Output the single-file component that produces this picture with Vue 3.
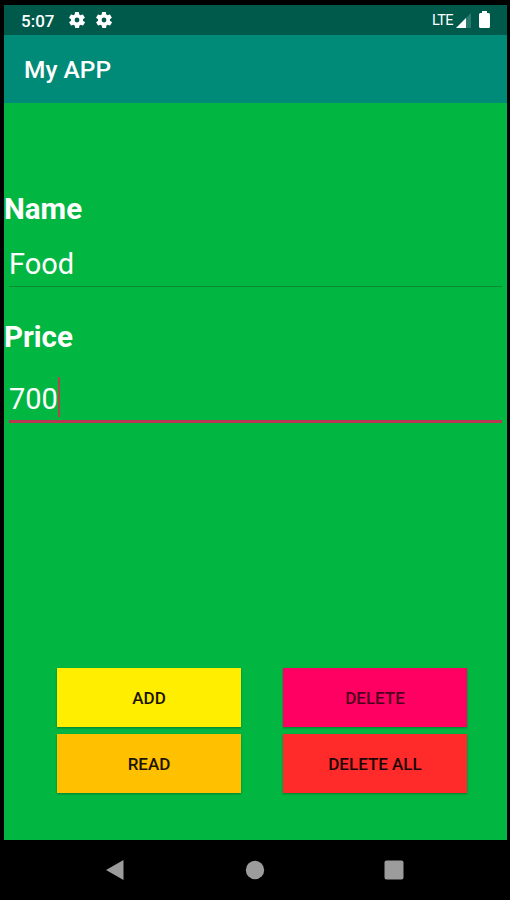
<script setup>
import { ref } from 'vue'

const fields = ref([
  { label: 'Name', value: 'Food', focused: false },
  { label: 'Price', value: '700', focused: true },
])

const buttons = [
  { text: 'ADD', type: 'add' },
  { text: 'DELETE', type: 'delete' },
  { text: 'READ', type: 'read' },
  { text: 'DELETE ALL', type: 'delete-all' },
]
</script>

<template>
  <div class="phone">
    <div class="screen">
      <div class="status-bar">
        <span class="time">5:07</span>
        <svg v-for="n in 2" :key="n" class="gear" viewBox="2 2 20 20">
          <path
            fill-rule="evenodd"
            d="M19.4 13c.1-.3.1-.7.1-1s0-.7-.1-1l2.1-1.6c.2-.2.3-.4.1-.7l-2-3.4c-.1-.2-.4-.3-.6-.2l-2.5 1c-.5-.4-1.1-.7-1.7-1l-.4-2.6c0-.3-.2-.5-.4-.5h-4c-.3 0-.5.2-.5.4l-.4 2.7c-.6.2-1.1.6-1.7 1l-2.5-1c-.2-.1-.5 0-.6.2l-2 3.4c-.1.2-.1.5.1.7L4.6 11c-.1.3-.1.7-.1 1s0 .7.1 1l-2.1 1.6c-.2.2-.3.4-.1.7l2 3.4c.1.2.4.3.6.2l2.5-1c.5.4 1.1.7 1.7 1l.4 2.6c0 .3.2.5.5.5h4c.2 0 .5-.2.5-.4l.4-2.7c.6-.2 1.1-.6 1.7-1l2.5 1c.2.1.5 0 .6-.2l2-3.4c.1-.2.1-.5-.1-.7zM12 15a3 3 0 1 1 0-6 3 3 0 0 1 0 6z"
          />
        </svg>
        <span class="network">LTE</span>
        <svg class="signal" viewBox="0 0 15 15">
          <path class="faint" d="M15 0v15H0z" />
          <path d="M10 5v10H0z" />
        </svg>
        <svg class="battery" viewBox="0 0 11 17">
          <path d="M3 0h5v2h1.5Q11 2 11 3.5v12Q11 17 9.5 17h-8Q0 17 0 15.5v-12Q0 2 1.5 2H3z" />
        </svg>
      </div>

      <header class="toolbar">My APP</header>

      <main class="content">
        <div v-for="field in fields" :key="field.label" class="field" :class="{ focused: field.focused }">
          <div class="label">{{ field.label }}</div>
          <div class="input">
            <span>{{ field.value }}</span>
            <span v-if="field.focused" class="caret"></span>
          </div>
        </div>

        <div class="actions">
          <button v-for="btn in buttons" :key="btn.type" type="button" class="btn" :class="btn.type">
            {{ btn.text }}
          </button>
        </div>
      </main>
    </div>

    <nav class="nav-bar">
      <svg class="nav-icon" viewBox="0 0 20 22"><path d="M0 11 17.5 1v20z" /></svg>
      <svg class="nav-icon" viewBox="0 0 20 22"><circle cx="10" cy="11" r="9.2" /></svg>
      <svg class="nav-icon" viewBox="0 0 20 22"><rect x="0.5" y="1.5" width="19" height="19" rx="2" /></svg>
    </nav>
  </div>
</template>

<style>
body {
  margin: 0;
  background: #000;
}
</style>

<style scoped>
.phone {
  box-sizing: border-box;
  width: 510px;
  height: 900px;
  padding: 5px 3px 0 4px;
  background: #000;
  font-family: Roboto, sans-serif;
  display: flex;
  flex-direction: column;
}

.screen {
  height: 835px;
  display: flex;
  flex-direction: column;
  background: #02b642;
  color: #fff;
}

.status-bar {
  box-sizing: border-box;
  height: 30px;
  padding: 0 17px;
  display: flex;
  align-items: center;
  background: #005a4b;
  font-weight: 500;
}

.status-bar svg {
  fill: #fff;
}

.time {
  width: 48px;
  padding-top: 1px;
  font-size: 17px;
}

.gear {
  width: 16px;
  height: 16px;
  margin-right: 11px;
}

.network {
  margin-left: auto;
  font-size: 14.5px;
  font-weight: 400;
  letter-spacing: -0.6px;
}

.signal {
  width: 15px;
  height: 15px;
  margin: 1px 8px 0 3px;
}

.signal .faint {
  fill: #2a7b6e;
}

.battery {
  width: 11px;
  height: 17px;
  margin-top: -1px;
}

.toolbar {
  height: 68px;
  padding-left: 20px;
  line-height: 69px;
  background: #008a78;
  font-size: 24.5px;
  font-weight: 500;
}

.content {
  flex: 1;
  display: flex;
  flex-direction: column;
  padding-top: 89px;
}

.label {
  font-size: 29.5px;
  font-weight: 700;
  line-height: 34px;
}

.input {
  box-sizing: border-box;
  height: 61px;
  margin: 0 5px;
  padding-bottom: 4px;
  display: flex;
  align-items: flex-end;
  border-bottom: 1px solid #078a32;
  font-size: 29px;
  line-height: 36px;
}

.field + .field {
  margin-top: 33px;
}

.focused .input {
  height: 69px;
  padding-bottom: 3px;
  border-bottom: 3px solid #b83752;
  line-height: 35px;
}

.caret {
  width: 2px;
  height: 40px;
  background: #b0474e;
}

.actions {
  margin: auto 40px 47px 53px;
  display: grid;
  grid-template-columns: 184px 184px;
  grid-auto-rows: 59px;
  gap: 7px 42px;
}

.btn {
  padding: 0;
  border: none;
  color: #1c1400;
  font-family: inherit;
  font-size: 17px;
  font-weight: 500;
  box-shadow: 0 1px 2px rgba(0, 0, 0, 0.3);
}

.add {
  background: #ffee00;
}

.read {
  background: #ffc000;
}

.delete {
  background: #ff0062;
  color: #4d001e;
}

.delete-all {
  background: #ff2a2a;
  color: #1e0505;
}

.nav-bar {
  flex: 1;
  padding-right: 1px;
  display: flex;
  justify-content: center;
  align-items: center;
  gap: 119px;
}

.nav-icon {
  width: 20px;
  height: 22px;
  fill: #9c9c9c;
}
</style>
